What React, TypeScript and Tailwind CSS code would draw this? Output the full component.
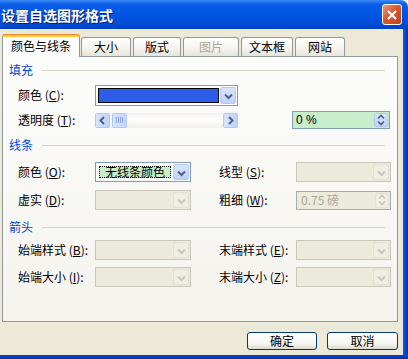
import React from 'react'

type TabDef = { label: string; cls: string; active?: boolean; disabled?: boolean }

const tabs: TabDef[] = [
  { label: '颜色与线条', cls: 'w-[78px]', active: true },
  { label: '大小', cls: 'ml-[1px] w-[50px]' },
  { label: '版式', cls: 'ml-[2px] w-[48px]' },
  { label: '图片', cls: 'ml-[2px] w-[56px]', disabled: true },
  { label: '文本框', cls: 'ml-[2px] w-[52px]' },
  { label: '网站', cls: 'ml-[2px] w-[50px]' },
]

function Label({ text, k, cls = 'w-[77px]' }: { text: string; k: string; cls?: string }) {
  return (
    <span className={`${cls} shrink-0 text-black`}>
      {text} (<span className="underline">{k}</span>):
    </span>
  )
}

function Arrow({ dir, disabled }: { dir: 'down' | 'left' | 'right'; disabled?: boolean }) {
  const d = dir === 'down' ? 'M3 5.5 L6.5 9 L10 5.5' : dir === 'left' ? 'M8 3 L4.5 6.5 L8 10' : 'M5 3 L8.5 6.5 L5 10'
  return (
    <svg width="13" height="13" viewBox="0 0 13 13">
      <path d={d} fill="none" stroke={disabled ? '#c9c7ba' : '#4d6185'} strokeWidth="2" />
    </svg>
  )
}

function DropButton({ disabled }: { disabled?: boolean }) {
  return disabled ? (
    <div className="w-[16px] shrink-0 flex items-center justify-center border border-[#e2e0d4] rounded-[2px] bg-[#efeee3]">
      <Arrow dir="down" disabled />
    </div>
  ) : (
    <div className="w-[16px] shrink-0 flex items-center justify-center border border-[#b4c8f4] rounded-[2px] bg-[linear-gradient(to_bottom,#d9e4fe,#c0d2fb)]">
      <Arrow dir="down" />
    </div>
  )
}

function DisabledCombo({ cls }: { cls: string }) {
  return (
    <div className={`${cls} h-[20px] flex p-px border border-[#c9c7ba] bg-[#ebeadb]`}>
      <div className="flex-1" />
      <DropButton disabled />
    </div>
  )
}

function SpinButton({ disabled }: { disabled?: boolean }) {
  const c = disabled ? '#c9c7ba' : '#4d6185'
  return (
    <div
      className={
        disabled
          ? 'w-[14px] shrink-0 flex items-center justify-center border border-[#e2e0d4] rounded-[2px] bg-[#efeee3]'
          : 'w-[14px] shrink-0 flex items-center justify-center border border-[#b4c8f4] rounded-[2px] bg-[linear-gradient(to_bottom,#d9e4fe,#c0d2fb)]'
      }
    >
      <svg width="10" height="14" viewBox="0 0 10 14">
        <path d="M2 5.5 L5 2.5 L8 5.5" fill="none" stroke={c} strokeWidth="1.6" />
        <path d="M2 8.5 L5 11.5 L8 8.5" fill="none" stroke={c} strokeWidth="1.6" />
      </svg>
    </div>
  )
}

function Heading({ text, cls }: { text: string; cls: string }) {
  return (
    <div className={`${cls} flex items-center h-[18px] pl-[6px] pr-[12px]`}>
      <span className="text-[#0046d5]">{text}</span>
      <div className="flex-1 h-px bg-[#d5d4c6] ml-[9px]" />
    </div>
  )
}

export default function App() {
  return (
    <div className="w-[408px] h-[359px] flex flex-col overflow-hidden text-[12px] leading-none font-['Noto_Sans_CJK_SC','Noto_Sans',sans-serif]">
      <div className="h-[29px] shrink-0 flex items-center justify-between rounded-tr-[7px] bg-[linear-gradient(to_bottom,#3b8df8_0%,#0b5de8_14%,#0056e4_45%,#004bd6_85%,#0040bd_100%)]">
        <span className="pl-[1px] text-white font-bold text-[14px] [text-shadow:1px_1px_0_#0a1e6e]">设置自选图形格式</span>
        <div className="mr-[6px] w-[20px] h-[21px] rounded-[3px] border border-white flex items-center justify-center bg-[linear-gradient(135deg,#ed9a78,#d65a2f_45%,#c2401a)]">
          <svg width="12" height="12" viewBox="0 0 12 12">
            <path d="M2 2 L10 10 M10 2 L2 10" stroke="white" strokeWidth="2.2" />
          </svg>
        </div>
      </div>

      <div className="flex flex-1">
        <div className="flex-1 flex flex-col bg-[#ece9d8] pl-[2px] pt-[5px]">
          <div className="flex items-end h-[22px]">
            {tabs.map((t) =>
              t.active ? (
                <div
                  key={t.label}
                  className={`${t.cls} relative z-10 h-[23px] -mb-px flex flex-col border-x border-[#919b9c] rounded-t-[3px] bg-[#fcfcfb]`}
                >
                  <div className="h-[1px] bg-[#e68b2c] rounded-t-[3px]" />
                  <div className="h-[2px] bg-[#ffc73c]" />
                  <div className="flex-1 flex items-center justify-center pb-[2px] text-black">{t.label}</div>
                </div>
              ) : (
                <div
                  key={t.label}
                  className={`${t.cls} h-[19px] flex items-center justify-center border-t border-x border-[#919b9c] rounded-t-[3px] bg-[linear-gradient(to_bottom,#ffffff,#f3f2ec_60%,#e6e4da)] ${t.disabled ? 'text-[#aca899]' : 'text-black'}`}
                >
                  {t.label}
                </div>
              )
            )}
          </div>

          <div className="w-[396px] h-[266px] flex flex-col border border-[#919b9c] bg-[linear-gradient(to_bottom,#fcfcfb,#f4f3ee)] pt-[4px]">
            <Heading text="填充" cls="" />

            <div className="mt-[6px] h-[20px] flex items-center pl-[15px]">
              <Label text="颜色" k="C" />
              <div className="w-[143px] h-[21px] flex p-px border border-[#7f9db9] bg-white">
                <div className="flex-1 p-px">
                  <div className="h-full border border-black bg-[#2b5de8]" />
                </div>
                <DropButton />
              </div>
            </div>

            <div className="mt-[5px] h-[20px] flex items-center pl-[15px]">
              <Label text="透明度" k="T" />
              <div className="w-[143px] h-[15px] flex bg-[linear-gradient(to_bottom,#f3f1ec,#fefefe_40%,#f1efe8)]">
                <div className="w-[15px] flex items-center justify-center border border-[#b4c8f4] rounded-[2px] bg-[linear-gradient(to_right,#d9e4fe,#c0d2fb)]">
                  <Arrow dir="left" />
                </div>
                <div className="ml-[2px] w-[15px] flex items-center justify-center gap-[1px] border border-[#b4c8f4] rounded-[2px] bg-[linear-gradient(to_right,#d9e4fe,#c6d6fc)]">
                  <div className="w-px h-[6px] bg-[#8fa7e0]" />
                  <div className="w-px h-[6px] bg-[#8fa7e0]" />
                  <div className="w-px h-[6px] bg-[#8fa7e0]" />
                  <div className="w-px h-[6px] bg-[#8fa7e0]" />
                </div>
                <div className="flex-1" />
                <div className="w-[15px] flex items-center justify-center border border-[#b4c8f4] rounded-[2px] bg-[linear-gradient(to_right,#d9e4fe,#c0d2fb)]">
                  <Arrow dir="right" />
                </div>
              </div>
              <div className="ml-[54px] w-[98px] h-[18px] flex p-px border border-[#7f9db9] bg-[#c8edcb]">
                <span className="flex-1 flex items-center pl-[2px] text-black font-['Liberation_Sans',sans-serif]">0 %</span>
                <SpinButton />
              </div>
            </div>

            <Heading text="线条" cls="mt-[6px]" />

            <div className="mt-[8px] h-[20px] flex items-center pl-[15px]">
              <Label text="颜色" k="O" />
              <div className="w-[96px] h-[20px] flex p-px border border-[#7f9db9] bg-white">
                <div className="flex-1 p-[2px]">
                  <div className="h-full flex items-center justify-center border border-dotted border-black bg-[#c8edcb] text-black">
                    无线条颜色
                  </div>
                </div>
                <DropButton />
              </div>
              <Label text="线型" k="S" cls="ml-[28px] w-[77px]" />
              <DisabledCombo cls="w-[95px]" />
            </div>

            <div className="mt-[8px] h-[20px] flex items-center pl-[15px]">
              <Label text="虚实" k="D" />
              <DisabledCombo cls="w-[96px]" />
              <Label text="粗细" k="W" cls="ml-[28px] w-[77px]" />
              <div className="w-[95px] h-[19px] flex p-px border border-[#a5acb2] bg-[#ebeadb]">
                <span className="flex-1 flex items-center pl-[3px] text-[#aca899]">0.75 磅</span>
                <SpinButton disabled />
              </div>
            </div>

            <Heading text="箭头" cls="mt-[8px]" />

            <div className="mt-[4px] h-[20px] flex items-center pl-[15px]">
              <Label text="始端样式" k="B" />
              <DisabledCombo cls="w-[96px]" />
              <Label text="末端样式" k="E" cls="ml-[28px] w-[77px]" />
              <DisabledCombo cls="w-[95px]" />
            </div>

            <div className="mt-[7px] h-[20px] flex items-center pl-[15px]">
              <Label text="始端大小" k="I" />
              <DisabledCombo cls="w-[96px]" />
              <Label text="末端大小" k="Z" cls="ml-[28px] w-[77px]" />
              <DisabledCombo cls="w-[95px]" />
            </div>
          </div>

          <div className="mt-[10px] flex justify-end gap-[10px] pr-[5px]">
            <button className="w-[70px] h-[18px] rounded-[3px] border border-[#003c74] bg-[linear-gradient(to_bottom,#ffffff,#f4f4f0_70%,#dcd8ce)] text-black text-[12px] leading-none">
              确定
            </button>
            <button className="w-[71px] h-[18px] rounded-[3px] border border-[#003c74] bg-[linear-gradient(to_bottom,#ffffff,#f4f4f0_70%,#dcd8ce)] text-black text-[12px] leading-none">
              取消
            </button>
          </div>
        </div>
        <div className="w-[5px] shrink-0 bg-[linear-gradient(to_right,#0a5be6,#0047d6,#00309c)]" />
      </div>
      <div className="h-[4px] shrink-0 bg-[linear-gradient(to_bottom,#0047d6,#00309c)]" />
    </div>
  )
}
